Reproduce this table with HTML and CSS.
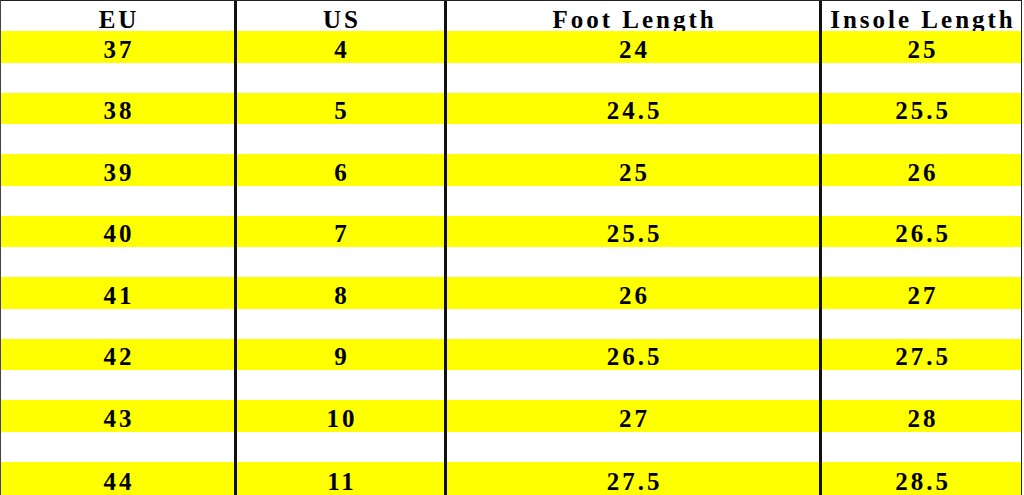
FILE: index.html
```html
<!DOCTYPE html>
<html>
<head>
<meta charset="utf-8">
<link rel="stylesheet" href="styles.css">
</head>
<body>
<div class="chart">
  <div class="c h">EU</div><div class="c h">US</div><div class="c h">Foot Length</div><div class="c h">Insole Length</div>
  <div class="c y">37</div><div class="c y">4</div><div class="c y">24</div><div class="c y">25</div>
  <div class="c w"></div><div class="c w"></div><div class="c w"></div><div class="c w"></div>
  <div class="c y">38</div><div class="c y">5</div><div class="c y">24.5</div><div class="c y">25.5</div>
  <div class="c w"></div><div class="c w"></div><div class="c w"></div><div class="c w"></div>
  <div class="c y">39</div><div class="c y">6</div><div class="c y">25</div><div class="c y">26</div>
  <div class="c w"></div><div class="c w"></div><div class="c w"></div><div class="c w"></div>
  <div class="c y">40</div><div class="c y">7</div><div class="c y">25.5</div><div class="c y">26.5</div>
  <div class="c w"></div><div class="c w"></div><div class="c w"></div><div class="c w"></div>
  <div class="c y">41</div><div class="c y">8</div><div class="c y">26</div><div class="c y">27</div>
  <div class="c w"></div><div class="c w"></div><div class="c w"></div><div class="c w"></div>
  <div class="c y">42</div><div class="c y">9</div><div class="c y">26.5</div><div class="c y">27.5</div>
  <div class="c w"></div><div class="c w"></div><div class="c w"></div><div class="c w"></div>
  <div class="c y">43</div><div class="c y">10</div><div class="c y">27</div><div class="c y">28</div>
  <div class="c w"></div><div class="c w"></div><div class="c w"></div><div class="c w"></div>
  <div class="c y last">44</div><div class="c y last">11</div><div class="c y last">27.5</div><div class="c y last">28.5</div>
</div>
</body>
</html>
```

FILE: styles.css
```css
html, body {
  margin: 0;
  padding: 0;
  background: #ffffff;
  overflow: hidden;
}

.chart {
  width: 1022px;
  box-sizing: border-box;
  display: grid;
  grid-template-columns: 233px 207px 372px 199px;
  column-gap: 3px;
  background: #111111;
  border-top: 1px solid #222222;
  border-left: 1px solid #444444;
  border-right: 1px solid #222222;
  font-family: "Liberation Serif", "Times New Roman", serif;
  font-weight: bold;
  font-size: 25px;
  color: #000000;
}

.c {
  display: flex;
  align-items: center;
  justify-content: center;
  box-sizing: border-box;
  padding-top: 6px;
  padding-left: 3px;
  letter-spacing: 3px;
  white-space: nowrap;
  overflow: hidden;
}

.h {
  height: 30px;
  padding-top: 7px;
  background: #ffffff;
}

.y {
  height: 31.5px;
  background: #ffff00;
}

.w {
  height: 30px;
  background: #ffffff;
}

.last {
  height: 34px;
}
```
